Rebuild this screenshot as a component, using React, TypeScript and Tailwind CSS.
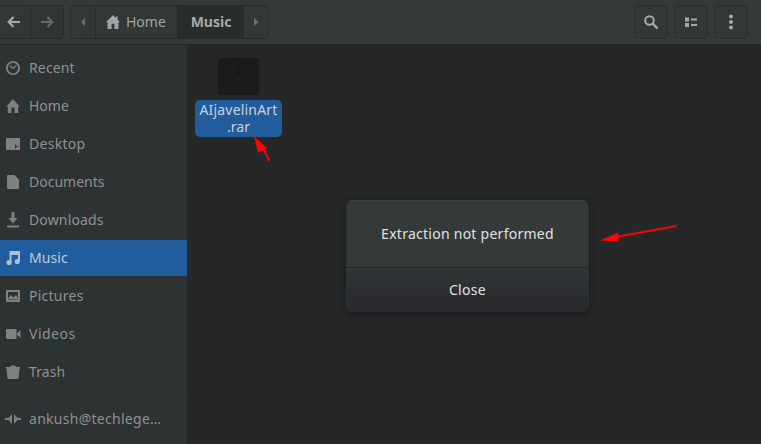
import React from "react";

type IconProps = { children: React.ReactNode; className?: string };

function Icon({ children, className = "" }: IconProps) {
  return (
    <svg viewBox="0 0 16 16" fill="currentColor" className={`size-4 shrink-0 ${className}`}>
      {children}
    </svg>
  );
}

const home = <path d="M8 1 1 8.3h1.6V15h4V9.8h2.8V15h4V8.3H15L12.6 5.8V2.5h-1.8v1.4z" />;

const places: { label: string; tracking: string; icon: React.ReactNode }[] = [
  {
    label: "Recent",
    tracking: "tracking-[0.15px]",
    icon: (
      <g fill="none" stroke="currentColor">
        <circle cx="8" cy="8" r="6.1" strokeWidth="1.9" />
        <path d="m5 5.5 3 2.8 3.5-2.8" strokeWidth="1.4" />
      </g>
    ),
  },
  { label: "Home", tracking: "tracking-[0px]", icon: <path d="M8 1 1.3 8.6h1.5V15h3.7V9.5h3V15h3.7V8.6h1.5z" /> },
  {
    label: "Desktop",
    tracking: "tracking-[0.3px]",
    icon: <path fillRule="evenodd" d="M1 2h14v12H1zM10 8v4.500h.7L11.700 11l1.300.2z" />,
  },
  { label: "Documents", tracking: "tracking-[0px]", icon: <path d="M2 2q0-1 1-1h6.500L14 5.500V14q0 1-1 1H3q-1 0-1-1z" /> },
  { label: "Downloads", tracking: "tracking-[0.15px]", icon: <path d="M6.500 0h3v6h3L8 11.500 3.500 6h3zM2 13.500h12v2H2z" /> },
  {
    label: "Music",
    tracking: "tracking-[0.1px]",
    icon: (
      <>
        <path d="M4.500 1H15v10.500h-2V5H6.500v8h-2z" />
        <circle cx="4" cy="12.500" r="2.600" />
        <circle cx="12.300" cy="11.500" r="2.600" />
      </>
    ),
  },
  {
    label: "Pictures",
    tracking: "tracking-[0.25px]",
    icon: <path fillRule="evenodd" d="M1 2h14v12H1zM3 4v6.500L6 7l2.500 2.500L11 7l2 3V4zM3 11.500V12h10v-.5z" />,
  },
  { label: "Videos", tracking: "tracking-[0.500px]", icon: <path d="M1 4q0-1 1-1h8.500q1 0 1 1v8q0 1-1 1H2q-1 0-1-1zM12 7.500l3.500-3.500v8L12 8.700z" /> },
  { label: "Trash", tracking: "tracking-[0.1px]", icon: <path d="M1 3h3.500Q6 1.200 8 1.200T11.500 3H15v2.200H1zM1.500 5h13l-.9 9q-.2 1-1.200 1H3.600q-1 0-1.200-1z" /> },
];

function Toolbar() {
  const tool = "flex size-[34px] items-center justify-center rounded-[4px] border border-[#282c2d] bg-[#323738] shadow-[0_1px_0_#3b4041]";
  return (
    <header className="flex h-[45px] shrink-0 items-start border-b border-[#222526] bg-[#343939] pt-[5px] text-[#a6a9a9]">
      <nav className="flex h-[34px] w-16 rounded-r-[4px] border border-l-0 border-[#282c2d] bg-[#323738]">
        <span className="flex w-[31px] items-center justify-center border-r border-[#282c2d] pr-[3px]">
          <Icon><path fill="none" stroke="currentColor" strokeWidth="2.200" d="M14 8H3M7.500 3 2.700 8l4.800 5" /></Icon>
        </span>
        <span className="flex flex-1 items-center justify-center bg-[#303435] text-[#656a6b]">
          <Icon><path fill="none" stroke="currentColor" strokeWidth="2" d="M2 8h11M8.500 3l4.800 5-4.800 5" /></Icon>
        </span>
      </nav>
      <nav className="ml-[6px] flex h-[34px] w-[199px] overflow-hidden rounded-[4px] border border-[#282c2d] bg-[#323738]">
        <span className="flex w-[25px] items-center justify-center border-r border-[#282c2d] text-[#676c6d]">
          <Icon><path d="M10 3.500v9L6 8z" /></Icon>
        </span>
        <span className="flex w-[82px] items-center gap-[5px] border-r border-[#282c2d] pl-[9px] text-[#a1a5a5]">
          <Icon>{home}</Icon><span className="-mt-[2px]">Home</span>
        </span>
        <span className="flex w-[66px] items-center justify-center border-r border-[#282c2d] bg-[#282c2d] pb-[2px] pl-px font-bold">Music</span>
        <span className="flex flex-1 items-center justify-center text-[#676c6d]">
          <Icon><path d="M6 3.500v9L10.500 8z" /></Icon>
        </span>
      </nav>
      <div className="ml-auto mr-[13px] flex gap-[6px]">
        <span className={tool}>
          <Icon><circle cx="6.500" cy="6.500" r="4.300" fill="none" stroke="currentColor" strokeWidth="2" /><path stroke="currentColor" strokeWidth="2.400" d="m9.700 9.700 4.800 4.800" /></Icon>
        </span>
        <span className={tool}>
          <Icon><path d="M2 3.500h4v4H2zM8 4.500h6v2H8zM2 9h4v4H2zM8 10h6v2H8z" /></Icon>
        </span>
        <span className={tool}>
          <Icon><circle cx="8" cy="2.500" r="2" /><circle cx="8" cy="8" r="2" /><circle cx="8" cy="13.500" r="2" /></Icon>
        </span>
      </div>
    </header>
  );
}

function Sidebar() {
  return (
    <aside className="w-[188px] shrink-0 border-r border-[#242728] bg-[#2d3232] pt-[5px] text-[#8e9192]">
      <ul className="flex flex-col gap-[2px]">
        {places.map((p) => (
          <li
            key={p.label}
            className={`flex h-9 items-center gap-2 pl-[5px] ${p.label === "Music" ? "bg-[#215d9c] text-[#bfcddd]" : ""}`}
          >
            <Icon className={p.label === "Music" ? "text-[#aabfd4]" : "text-[#7d8182]"}>{p.icon}</Icon>
            <span className={`-mt-[2px] ${p.tracking}`}>{p.label}</span>
          </li>
        ))}
      </ul>
      <div className="mt-[5px] border-t border-[#292d2e]" />
      <div className="mt-[5px] flex h-9 items-center gap-2 pl-[5px]">
        <Icon className="text-[#7d8182]"><path d="M7 3v10L3.500 9H0V7h3.500zM9 3v10l3.500-4H16V7h-3.500z" /></Icon>
        <span className="-mt-[2px] tracking-[0.280px]">ankush@techlege…</span>
      </div>
    </aside>
  );
}

function Arrow({ className, line, head }: { className: string; line: string; head: string }) {
  return (
    <svg className={`absolute ${className}`} fill="none">
      <path d={line} stroke="#f50507" strokeWidth="2" strokeLinecap="round" />
      <path d={head} fill="#fb0307" />
    </svg>
  );
}

export default function App() {
  return (
    <div className="relative flex h-[444px] w-[761px] flex-col overflow-hidden bg-[#252728] font-['Noto_Sans','Open_Sans',sans-serif] text-[14px] leading-[17px]">
      <Toolbar />
      <div className="flex min-h-0 flex-1">
        <Sidebar />
        <main className="flex-1 pl-[7px] pt-[13px]">
          <figure className="flex w-[87px] flex-col items-center">
            <svg viewBox="0 0 41 37" className="h-[37px] w-[41px]">
              <rect width="41" height="37" rx="2" fill="#1a1b1c" />
              <path d="M20.500 1v15" stroke="#171819" strokeWidth="2" />
              <path d="M18.500 19h3v4h-3z" fill="#222324" />
            </svg>
            <figcaption className="mt-[5px] h-[37px] w-full rounded-[5px] bg-[#215d9c] pt-px text-center text-[#c6d1df]">
              <span className="block tracking-[0.2px]">AIjavelinArt</span>
              <span className="block">.rar</span>
            </figcaption>
          </figure>
        </main>
      </div>
      <section role="dialog" className="absolute left-[346px] top-[200px] flex h-[113px] w-[243px] flex-col overflow-hidden rounded-[7px] border border-t-[#3c4142] border-x-[#2d3132] border-b-[#1e2122] bg-[#343939] text-[#e0e2e2] shadow-[0_1px_5px_#171919]">
        <p className="flex h-[67px] shrink-0 items-center justify-center border-b border-[#222627] pb-px tracking-[0.260px]">Extraction not performed</p>
        <button className="flex-1 border-t border-[#353a3b] bg-linear-to-b from-[#303536] to-[#27292b] pb-[2px] tracking-[0.300px]">Close</button>
      </section>
      <Arrow className="left-[250px] top-[132px] h-[34px] w-[26px]" line="M13 16 19 28" head="M4 4 17 16 8 21z" />
      <Arrow className="left-[596px] top-[220px] h-[26px] w-[86px]" line="M20 17 80 6" head="M4 20.500 22 12.500 23 21.500z" />
    </div>
  );
}
